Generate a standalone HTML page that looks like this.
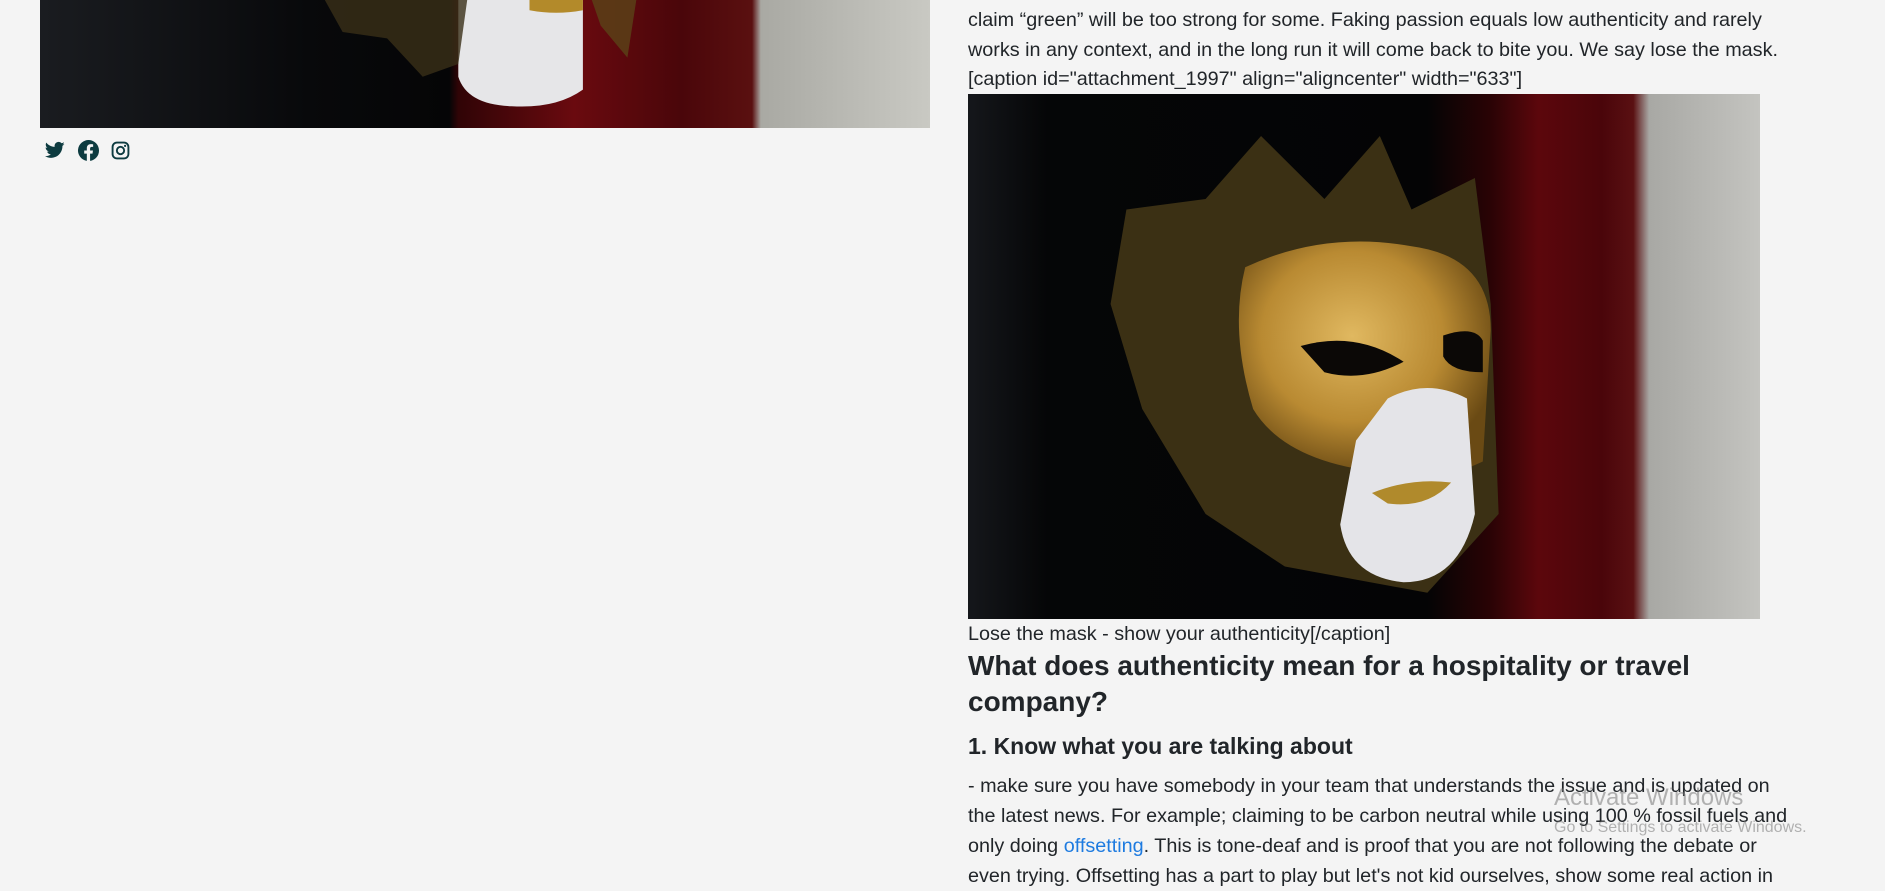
<!DOCTYPE html>
<html><head><meta charset="utf-8"><style>
html,body{margin:0;padding:0;background:#f4f4f4;width:1885px;height:873px;overflow:hidden;font-family:"Liberation Sans",sans-serif;color:#212529}
.abs{position:absolute}
.t{font-size:19.8px;line-height:30px;white-space:nowrap}
a{color:#1e7be0;text-decoration:none}
</style></head><body>
<svg class="abs" style="left:40px;top:0" width="890" height="128" viewBox="0 0 100 100" preserveAspectRatio="none">
<defs><linearGradient id="lg" x1="0" x2="1"><stop offset="0" stop-color="#1a1c20"/><stop offset=".3" stop-color="#08090b"/><stop offset=".46" stop-color="#050506"/><stop offset=".47" stop-color="#300406"/><stop offset=".6" stop-color="#6a0a0f"/><stop offset=".72" stop-color="#4a060a"/><stop offset=".8" stop-color="#5a1010"/><stop offset=".81" stop-color="#a9a9a3"/><stop offset="1" stop-color="#c9c9c3"/></linearGradient></defs>
<rect width="100" height="100" fill="url(#lg)"/>
<path d="M47 0 H61 V70 Q58 85 53 83 Q48 82 47 60Z" fill="#e6e6e8"/>
<path d="M55 0 H61 V8 Q58 12 55 8Z" fill="#b38a2a"/>
<path d="M32 0 L48 0 L47 50 L43 60 L39 30 L34 25Z" fill="#3a3018" opacity=".8"/>
<path d="M62 0 L67 0 L66 45 L63 20Z" fill="#5a4418" opacity=".8"/>
</svg>
<svg class="abs" style="left:44px;top:140px" width="22" height="20" viewBox="0 0 24 24"><path fill="#0d3b40" d="M23.6 4.6c-.9.4-1.8.6-2.8.8 1-.6 1.8-1.5 2.1-2.7-.9.6-2 1-3.1 1.2C19 2.9 17.7 2.3 16.3 2.300c-2.7 0-4.8 2.2-4.800 4.800 0 .4 0 .8.1 1.1C7.5 8 3.900 6.100 1.600 3.100c-.4.7-.7 1.600-.7 2.400 0 1.7.9 3.2 2.1 4-.8 0-1.5-.2-2.2-.6v.1c0 2.3 1.7 4.3 3.9 4.7-.4.1-.8.2-1.3.2-.3 0-.6 0-.9-.1.6 1.9 2.4 3.3 4.5 3.4-1.7 1.3-3.7 2.1-6 2.1-.4 0-.8 0-1.2-.1 2.1 1.4 4.7 2.2 7.4 2.2 8.9 0 13.7-7.4 13.7-13.7v-.6c1-.7 1.8-1.6 2.4-2.5z"/></svg>
<svg class="abs" style="left:78px;top:140px" width="21" height="21" viewBox="0 0 24 24"><path fill="#0d3b40" d="M24 12A12 12 0 1 0 10.1 23.9v-8.4H7.1V12h3V9.4c0-3 1.8-4.7 4.5-4.7 1.3 0 2.7.2 2.7.2v2.9h-1.5c-1.5 0-2 .9-2 1.9V12h3.3l-.5 3.5h-2.8v8.4A12 12 0 0 0 24 12z"/></svg>
<svg class="abs" style="left:111px;top:141px" width="19" height="19" viewBox="0 0 24 24"><rect x="2" y="2" width="20" height="20" rx="5.5" fill="none" stroke="#0d3b40" stroke-width="2.4"/><circle cx="12" cy="12" r="4.6" fill="none" stroke="#0d3b40" stroke-width="2.4"/><circle cx="17.8" cy="6.2" r="1.4" fill="#0d3b40"/></svg>

<div class="abs t" style="left:968px;top:5px">claim “green” will be too strong for some. Faking passion equals low authenticity and rarely</div>
<div class="abs t" style="left:968px;top:35px">works in any context, and in the long run it will come back to bite you. We say lose the mask.</div>
<div class="abs t" style="left:968px;top:64px">[caption id="attachment_1997" align="aligncenter" width="633"]</div>

<svg class="abs" style="left:968px;top:94px" width="792" height="525" viewBox="0 0 100 100" preserveAspectRatio="none">
<defs><linearGradient id="mg" x1="0" x2="1"><stop offset="0" stop-color="#15171b"/><stop offset=".1" stop-color="#050607"/><stop offset=".58" stop-color="#040405"/><stop offset=".66" stop-color="#2a0305"/><stop offset=".72" stop-color="#5c070c"/><stop offset=".8" stop-color="#4a050a"/><stop offset=".84" stop-color="#5a1012"/><stop offset=".86" stop-color="#a8a8a4"/><stop offset="1" stop-color="#c4c4c0"/></linearGradient>
<radialGradient id="gold" cx=".45" cy=".4" r=".6"><stop offset="0" stop-color="#e0b860"/><stop offset=".6" stop-color="#b98a32"/><stop offset="1" stop-color="#6a4a14"/></radialGradient></defs>
<rect width="100" height="100" fill="url(#mg)"/>
<path d="M20 22 L30 20 L37 8 L45 20 L52 8 L56 22 L64 16 L66 40 L67 80 L58 95 L40 90 L30 80 L22 60 L18 40Z" fill="#3b3014"/>
<path d="M35 33 Q45 26 56 29 Q66 31 66 45 L65 70 Q58 75 52 72 Q40 70 36 60 Q33 45 35 33Z" fill="url(#gold)"/>
<path d="M42 48 Q49 45 55 51 Q50 55 45 53Z" fill="#0b0806"/>
<path d="M60 46 Q64 44 65 47 L65 53 Q61 53 60 50Z" fill="#0b0806"/>
<path d="M53 58 Q58 54 63 58 L64 80 Q62 93 55 93 Q48 92 47 82 L49 66Z" fill="#e4e4e8"/>
<path d="M51 76 Q56 73 61 74 Q58 79 53 78Z" fill="#b08a2c"/>
</svg>

<div class="abs t" style="left:968px;top:619px">Lose the mask - show your authenticity[/caption]</div>
<div class="abs" style="left:968px;top:648px;font-size:28px;line-height:36px;font-weight:bold">What does authenticity mean for a hospitality or travel<br>company?</div>
<div class="abs" style="left:968px;top:732px;font-size:23px;line-height:28px;font-weight:bold">1. Know what you are talking about</div>
<div class="abs t" style="left:968px;top:771px">- make sure you have somebody in your team that understands the issue and is updated on</div>
<div class="abs t" style="left:968px;top:801px">the latest news. For example; claiming to be carbon neutral while using 100 % fossil fuels and</div>
<div class="abs t" style="left:968px;top:831px">only doing <a>offsetting</a>. This is tone-deaf and is proof that you are not following the debate or</div>
<div class="abs t" style="left:968px;top:861px">even trying. Offsetting has a part to play but let's not kid ourselves, show some real action in</div>
<div class="abs" style="left:1554px;top:784px;font-size:24px;color:rgba(120,120,120,.55);white-space:nowrap">Activate Windows</div>
<div class="abs" style="left:1554px;top:819px;font-size:16px;color:rgba(120,120,120,.55);white-space:nowrap">Go to Settings to activate Windows.</div>
</body></html>
